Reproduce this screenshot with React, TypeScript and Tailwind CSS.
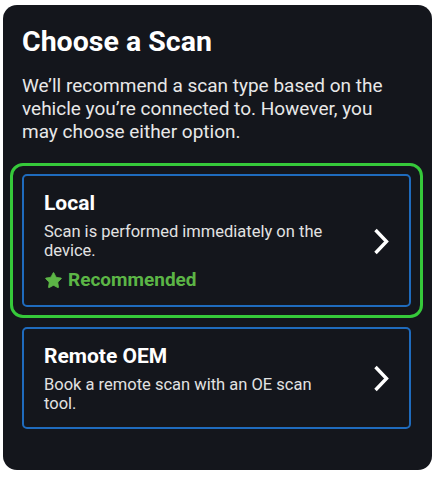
import { Star } from "lucide-react";

function Chevron() {
  return (
    <svg width="16" height="27" viewBox="0 0 16 27" className="shrink-0">
      <path
        d="M2.5 2 L13.5 13.5 L2.5 25"
        fill="none"
        stroke="#ffffff"
        strokeWidth="3.4"
        strokeLinejoin="miter"
      />
    </svg>
  );
}

function ScanCard({
  title,
  desc,
  recommended,
}: {
  title: string;
  desc: string;
  recommended?: boolean;
}) {
  return (
    <div className="flex items-center rounded-[5px] border-2 border-[#1f6bbd] pt-[15px] pb-[14px] pl-[20px] pr-[20px]">
      <div className="flex-1 pr-[35px]">
        <div className="text-[21px] leading-[24px] font-bold text-white">{title}</div>
        <div className="mt-[7px] text-[16.5px] leading-[19px] text-[#e2e2e2]">{desc}</div>
        {recommended && (
          <div className="mt-[9px] flex items-center gap-[5px] text-[19px] leading-[22px] font-bold text-[#5cb546]">
            <Star size={19} fill="#5cb546" strokeWidth={1} />
            <span>Recommended</span>
          </div>
        )}
      </div>
      <Chevron />
    </div>
  );
}

export default function App() {
  return (
    <div
      className="min-h-screen bg-white pl-[3px] pt-[5px]"
      style={{ fontFamily: "Roboto, 'Liberation Sans', sans-serif" }}
    >
      <div className="h-[465px] w-[429px] rounded-[14px] bg-[#14161c] pt-[20px]">
        <h1 className="px-[19px] text-[28.5px] leading-[34px] font-bold text-white">Choose a Scan</h1>
        <p className="mt-[15px] ml-[19px] w-[372px] text-[19px] leading-[23px] text-[#e8e8e8]">
          We’ll recommend a scan type based on the vehicle you’re connected to. However, you
          may choose either option.
        </p>
        <div className="mt-[20px] pl-[7px] pr-[9px]">
          <div className="rounded-[13px] border-[3px] border-[#36c93a] px-[9px] py-[8px]">
            <ScanCard
              title="Local"
              desc="Scan is performed immediately on the device."
              recommended
            />
          </div>
          <div className="mt-[9px] px-[12px]">
            <ScanCard title="Remote OEM" desc="Book a remote scan with an OE scan tool." />
          </div>
        </div>
      </div>
    </div>
  );
}
